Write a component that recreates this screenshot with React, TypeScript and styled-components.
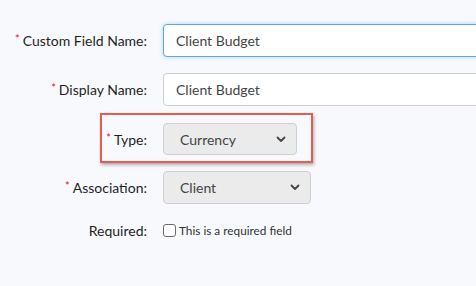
import React from "react";
import styled, { createGlobalStyle } from "styled-components";

const Global = createGlobalStyle`
  html, body { margin: 0; padding: 0; background: #f8f9fd; }
  body { font-family: Lato, "Open Sans", sans-serif; width: 476px; height: 286px; overflow: hidden; }
`;

const Form = styled.div`
  display: grid;
  grid-template-columns: 147px auto;
  column-gap: 16px;
  row-gap: 16px;
  padding-top: 24px;
  align-items: center;
`;

const Row = styled.div`
  display: contents;
`;

const Label = styled.label`
  justify-self: end;
  font-size: 14px;
  color: #1f1f1f;
  white-space: nowrap;
`;

const Star = styled.span`
  color: #e02020;
  font-size: 11px;
  vertical-align: 3px;
  margin-right: 3px;
`;

const TextInput = styled.input<{ $focused?: boolean }>`
  box-sizing: border-box;
  width: 330px;
  height: 33px;
  padding: 0 12px;
  font-family: Lato, sans-serif;
  font-size: 14px;
  color: #444;
  background: #fff;
  border: 1px solid ${(p) => (p.$focused ? "#5aa9e6" : "#cfcfcf")};
  border-radius: 4px;
  box-shadow: ${(p) => (p.$focused ? "0 0 4px rgba(90,169,230,0.45)" : "none")};
  outline: none;
`;

const SelectBox = styled.div<{ $w: number; $h: number }>`
  box-sizing: border-box;
  width: ${(p) => p.$w}px;
  height: ${(p) => p.$h}px;
  display: flex;
  align-items: center;
  justify-content: space-between;
  padding: 0 10px 0 16px;
  font-size: 14px;
  color: #444;
  background: #ebebeb;
  border: 1px solid #cfcfcf;
  border-radius: 4px;
`;

const Highlight = styled.div`
  position: relative;
  grid-column: 1 / 3;
  display: grid;
  grid-template-columns: 147px auto;
  column-gap: 16px;
  align-items: center;
  margin-top: 1px;
  &::before {
    content: "";
    position: absolute;
    left: 100px;
    top: -10px;
    width: 213px;
    height: 50px;
    box-sizing: border-box;
    border: 2px solid #ea5a4f;
    box-shadow: 1px 2px 3px rgba(0,0,0,0.3);
    pointer-events: none;
  }
`;

const CheckRow = styled.div`
  display: flex;
  align-items: center;
  gap: 3px;
  min-height: 21px;
  font-size: 11.8px;
  color: #333;
`;

const Box = styled.span`
  box-sizing: border-box;
  width: 13px;
  height: 13px;
  border: 1px solid #6b6b6b;
  border-radius: 3px;
  background: #fff;
`;

const Chevron = () => (
  <svg width="10" height="7" viewBox="0 0 10 7">
    <path d="M1.5 1.5 L5 5 L8.5 1.5" fill="none" stroke="#444" strokeWidth="1.8" strokeLinecap="round" strokeLinejoin="round" />
  </svg>
);

export default function App() {
  return (
    <>
      <Global />
      <Form>
        <Row>
          <Label><Star>*</Star>Custom Field Name:</Label>
          <TextInput $focused defaultValue="Client Budget" />
        </Row>
        <Row>
          <Label><Star>*</Star>Display Name:</Label>
          <TextInput defaultValue="Client Budget" />
        </Row>
        <Highlight>
          <Label><Star>*</Star>Type:</Label>
          <SelectBox $w={134} $h={32}>
            <span>Currency</span>
            <Chevron />
          </SelectBox>
        </Highlight>
        <Row>
          <Label><Star>*</Star>Association:</Label>
          <SelectBox $w={148} $h={33}>
            <span>Client</span>
            <Chevron />
          </SelectBox>
        </Row>
        <Row>
          <Label>Required:</Label>
          <CheckRow>
            <Box />
            <span>This is a required field</span>
          </CheckRow>
        </Row>
      </Form>
    </>
  );
}
